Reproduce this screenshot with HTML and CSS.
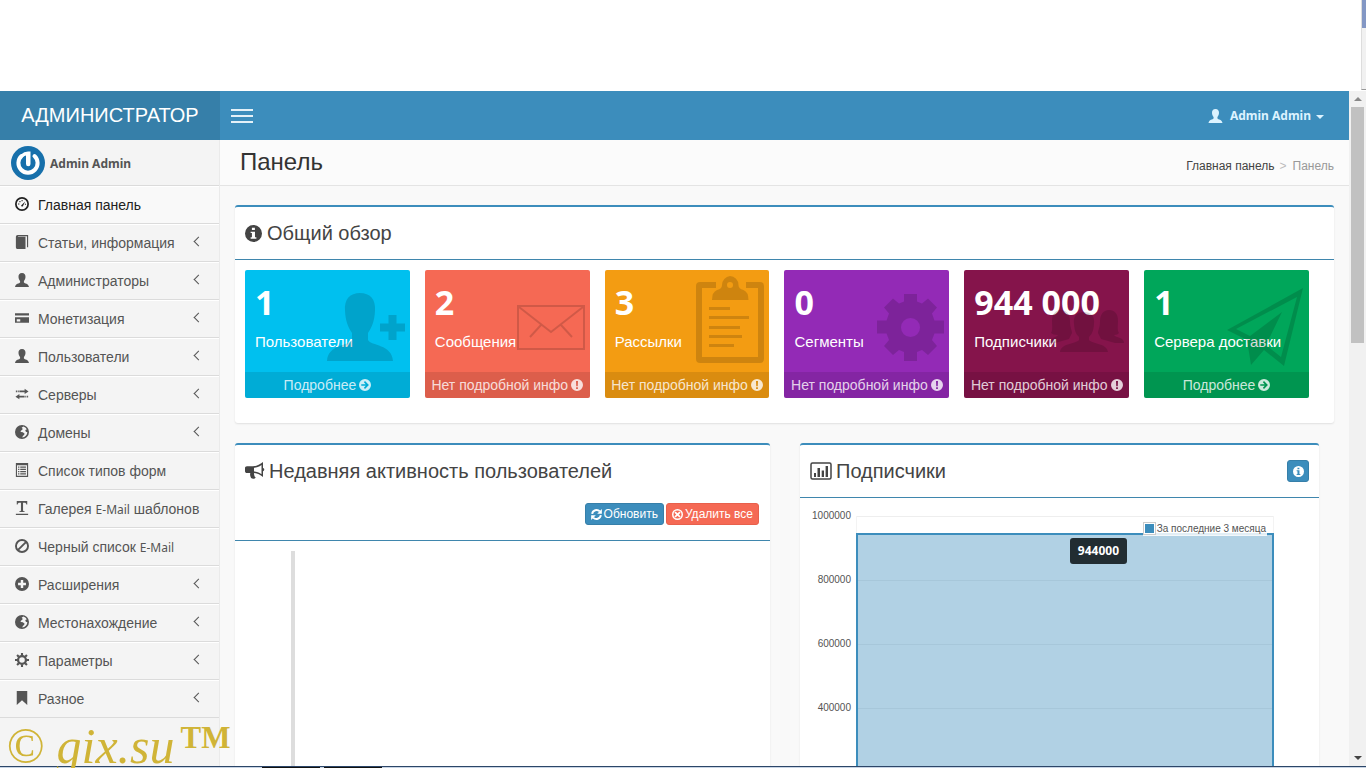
FILE: index.html
```html
<!DOCTYPE html>
<html lang="ru">
<head>
<meta charset="utf-8">
<title>Панель</title>
<link rel="stylesheet" href="styles.css">
</head>
<body>
<svg class="sprite" aria-hidden="true">
  <symbol id="user" viewBox="0 0 16 16"><path d="M8 0c2.900 0 4.200 1.900 4 4.700-.1 2-.9 3.500-1.800 4.400v1.700c.7 1.200 5.400 1.200 5.800 5.200H0c.4-4 5.100-4 5.800-5.200V9.100C4.900 8.200 4.100 6.700 4 4.700 3.800 1.900 5.100 0 8 0z"/></symbol>
  <symbol id="dash" viewBox="0 0 16 16"><circle cx="8" cy="8" r="7" fill="none" stroke="currentColor" stroke-width="2"/><path d="M7 9.600 11.600 5 9 10.600a1.200 1.200 0 0 1-2-1zM3.500 7.500h1.500v1.200H3.500zM5 4.700h1.300V6H5zM7.500 3.300h1.200v1.500H7.500zM11.300 7.700h1.300v1.200h-1.300z"/></symbol>
  <symbol id="book" viewBox="0 0 16 16"><path d="M3 0h12v14h-1.300V1.500H3.500V2H12v14H3.200A2 2 0 0 1 1 14V2a2 2 0 0 1 2-2z"/></symbol>
  <symbol id="card" viewBox="0 0 16 16"><path d="M0 2.500h16V5H0zM0 7h16v6.500H0zm2 2.500V12h4V9.500z" fill-rule="evenodd"/></symbol>
  <symbol id="transfer" viewBox="0 0 16 16"><path d="M5 4h6V2l4.500 3L11 8V6H5zM3 4h1.300v2H3zM1 4h1.200v2H1zM11 10H5V8l-4.500 3L5 14v-2h6zM11.800 10H13v2h-1.200zM13.800 10H15v2h-1.200z"/></symbol>
  <symbol id="globe" viewBox="0 0 16 16"><path fill-rule="evenodd" d="M8 0a8 8 0 1 1 0 16A8 8 0 0 1 8 0zm1.500 1.800L7.600 3.200 9 4.600 7.500 6l-1.300 1 .7 1 2.100.3 2 1.600-.7 1.600-1.400 1-.5 1.900c3-.5 5.600-2.900 5.700-6.100l-1.700-.7-.7-2 1.700-.6C12.600 3.300 11.200 2.300 9.500 1.800z"/></symbol>
  <symbol id="list" viewBox="0 0 16 16"><path fill-rule="evenodd" d="M1 0h14v16H1zm1.300 2.500v12.200h11.400V2.500zM3.500 4H5v1.300H3.500zM6 4h6.500v1.300H6zM3.500 6.600H5V8H3.500zM6 6.600h6.500V8H6zM3.500 9.200H5v1.300H3.500zM6 9.200h6.500v1.300H6zM3.500 11.800H5V13H3.500zM6 11.800h6.500V13H6z"/></symbol>
  <symbol id="textw" viewBox="0 0 16 16"><path d="M2 0h12v4h-1c-.2-1.400-.8-2-2.500-2H9.200v8.500c0 1 .5 1.200 1.800 1.300v.9H5v-.9c1.300-.1 1.800-.3 1.800-1.300V2H5.500C3.800 2 3.200 2.600 3 4H2zM1 14.500h14V16H1z"/></symbol>
  <symbol id="ban" viewBox="0 0 16 16"><g fill="none" stroke="currentColor" stroke-width="2.200"><circle cx="8" cy="8" r="6.900"/><path d="M3.500 12.500l9-9"/></g></symbol>
  <symbol id="plus" viewBox="0 0 16 16"><path fill-rule="evenodd" d="M8 0a8 8 0 1 1 0 16A8 8 0 0 1 8 0zM6.600 3.500v3.100H3.500v2.800h3.100v3.100h2.800V9.400h3.100V6.600H9.400V3.500z"/></symbol>
  <symbol id="cog" viewBox="0 0 16 16"><circle cx="8" cy="8" r="4.500" fill="none" stroke="currentColor" stroke-width="2.600"/><path d="M6.800 0h2.400v3H6.800zM6.800 13h2.400v3H6.800zM0 6.800h3v2.400H0zM13 6.800h3v2.400h-3zM1.500 3.200l1.700-1.700 2 2-1.700 1.700zM10.800 12.500l1.700-1.700 2 2-1.700 1.700zM3.200 14.500l-1.700-1.700 2-2 1.700 1.700zM12.500 5.200l-1.700-1.700 2-2 1.700 1.700z"/></symbol>
  <symbol id="mark" viewBox="0 0 16 16"><path d="M2 0h12v16l-6-5.500L2 16z"/></symbol>
  <symbol id="info" viewBox="0 0 16 16"><path fill-rule="evenodd" d="M8 0a8 8 0 1 1 0 16A8 8 0 0 1 8 0zM6.500 2.700v2.100h2.800V2.700zM5.300 6.300v1.300h1.200v4H5.300V13h5.400v-1.400H9.400V6.300z"/></symbol>
  <symbol id="bang" viewBox="0 0 16 16"><path fill-rule="evenodd" d="M8 0a8 8 0 1 1 0 16A8 8 0 0 1 8 0zM6.700 2.500l.3 7h2l.3-7zM6.800 11v2.300h2.400V11z"/></symbol>
  <symbol id="arrow" viewBox="0 0 16 16"><path fill-rule="evenodd" d="M8 0a8 8 0 1 1 0 16A8 8 0 0 1 8 0zM8 2.800 6.500 4.300 9 6.900H3v2.200h6l-2.500 2.600L8 13.200 13.200 8z"/></symbol>
  <symbol id="remove" viewBox="0 0 16 16"><circle cx="8" cy="8" r="6.900" fill="none" stroke="currentColor" stroke-width="2.200"/><path d="M5.200 3.500 8 6.200l2.800-2.700 1.800 1.800L9.800 8l2.800 2.800-1.800 1.700L8 9.800l-2.800 2.700-1.800-1.700L6.200 8 3.400 5.300z"/></symbol>
  <symbol id="refresh" viewBox="0 0 16 16"><path fill="none" stroke="currentColor" stroke-width="2.800" d="M1.700 7A6.400 6.400 0 0 1 12.800 3.600M14.300 9A6.400 6.400 0 0 1 3.200 12.400"/><path d="M15.800 0v6.800H9zM.2 16V9.200H7z"/></symbol>
  <symbol id="horn" viewBox="0 0 20 18"><path fill-rule="evenodd" d="M18 0v6c1.700.2 1.700 3 0 3.200V15c-2.700-2.300-5.500-3.700-8.500-4-.8.600-.7 1.500-.1 2-.4.900.2 1.700 1.300 2.600-.7 1.500-3.500 1.600-4.600.5C5.500 14.300 4.700 13 5.300 11H2C.8 11 0 10.300 0 9.200V6c0-1.100.8-1.800 2-1.800h6C11.500 4.200 15 2.600 18 0zm-1.500 3C14 4.800 11.500 5.600 9 5.800v3.700c2.500.2 5 1 7.500 2.700z"/></symbol>
  <symbol id="chart" viewBox="0 0 22 18"><rect x="1" y="1" width="20" height="16" rx="1.500" fill="none" stroke="currentColor" stroke-width="1.500"/><path d="M4 11h2v4H4zM7.500 6h2.500v9H7.500zM11.700 8.500H14V15h-2.300zM15.600 4H18v11h-2.400z"/></symbol>
</svg>

<div class="window-top"><span class="window-edge"></span></div>

<div class="viewport">
  <div class="app">
    <header class="topbar">
      <a class="brand" href="#">АДМИНИСТРАТОР</a>
      <button class="toggle" aria-label="Меню"><span></span><span></span><span></span></button>
      <a class="account" href="#"><svg class="ico"><use href="#user"/></svg>Admin Admin<i class="caret"></i></a>
    </header>
    <div class="body">
      <aside class="sidebar">
        <div class="profile">
          <svg class="avatar" viewBox="0 0 34 34"><circle cx="17" cy="17" r="17" fill="#1770ab"/><path d="M10.500 10A9.600 9.600 0 1 0 23.500 10" fill="none" stroke="#fff" stroke-width="4" stroke-linecap="round"/><path d="M10 8.500q3-3 7-3h2.500V18a2.200 2.200 0 0 1-4.500 0V9.500q-2 .5-3.500 2z" fill="#fff"/></svg>
          <span>Admin Admin</span>
        </div>
        <nav class="menu">
          <a class="active" href="#"><svg class="ico"><use href="#dash"/></svg>Главная панель</a>
          <a class="more" href="#"><svg class="ico"><use href="#book"/></svg>Статьи, информация</a>
          <a class="more" href="#"><svg class="ico"><use href="#user"/></svg>Администраторы</a>
          <a class="more" href="#"><svg class="ico"><use href="#card"/></svg>Монетизация</a>
          <a class="more" href="#"><svg class="ico"><use href="#user"/></svg>Пользователи</a>
          <a class="more" href="#"><svg class="ico"><use href="#transfer"/></svg>Серверы</a>
          <a class="more" href="#"><svg class="ico"><use href="#globe"/></svg>Домены</a>
          <a href="#"><svg class="ico"><use href="#list"/></svg>Список типов форм</a>
          <a href="#"><svg class="ico"><use href="#textw"/></svg><span>Галерея <span class="latin">E-Mail</span> шаблонов</span></a>
          <a href="#"><svg class="ico"><use href="#ban"/></svg><span>Черный список <span class="latin">E-Mail</span></span></a>
          <a class="more" href="#"><svg class="ico"><use href="#plus"/></svg>Расширения</a>
          <a class="more" href="#"><svg class="ico"><use href="#globe"/></svg>Местонахождение</a>
          <a class="more" href="#"><svg class="ico"><use href="#cog"/></svg>Параметры</a>
          <a class="more" href="#"><svg class="ico"><use href="#mark"/></svg>Разное</a>
        </nav>
      </aside>
      <main class="content">
        <div class="page-head">
          <h1>Панель</h1>
          <nav class="crumbs"><a href="#">Главная панель</a><span class="sep">&gt;</span><span>Панель</span></nav>
        </div>
        <div class="page">
          <section class="box">
            <div class="box-head"><h2><svg class="ico-lg"><use href="#info"/></svg>Общий обзор</h2></div>
            <div class="tiles">
              <article class="tile cyan">
                <div class="tile-main"><strong>1</strong><p>Пользователи</p></div>
                <svg class="art" viewBox="0 0 80 100"><path d="M35 23c10 0 16 6 15 18-.5 10-3 16-7 22v7c3 6 24 4 25 21H2c1-17 22-15 25-21v-7c-4-6-6.500-12-7-22-1-12 5-18 15-18zM63.500 45h8v8.500H80v8h-8.500V70h-8v-8.500H55v-8h8.500z"/></svg>
                <a href="#">Подробнее <svg class="ico-sm"><use href="#arrow"/></svg></a>
              </article>
              <article class="tile red">
                <div class="tile-main"><strong>2</strong><p>Сообщения</p></div>
                <svg class="art line" viewBox="0 0 80 100"><path stroke-width="2" d="M13 36h66v43H13zM14 37l32 25 32-25M36 55L25 67M56 55l11 12"/></svg>
                <a href="#">Нет подробной инфо <svg class="ico-sm"><use href="#bang"/></svg></a>
              </article>
              <article class="tile orange">
                <div class="tile-main"><strong>3</strong><p>Рассылки</p></div>
                <svg class="art" viewBox="0 0 80 100"><path fill-rule="evenodd" d="M32 12v6H18v69h56V18H62v-6h14q4 0 4 4v73q0 4-4 4H16q-4 0-4-4V16q0-4 4-4zM46 6a9 9 0 0 1 8.500 9q0 4 5 5 5 2 5 10H28q0-8 5-10 5-1 5-5A9 9 0 0 1 46 6zm0 6a3 3 0 1 0 0 6 3 3 0 0 0 0-6zM25 37h21v3H25zM25 46h40v3H25zM25 56h31v3H25zM25 65h33v3H25zM25 74h25v3H25z"/></svg>
                <a href="#">Нет подробной инфо <svg class="ico-sm"><use href="#bang"/></svg></a>
              </article>
              <article class="tile purple">
                <div class="tile-main"><strong>0</strong><p>Сегменты</p></div>
                <svg class="art" viewBox="0 0 80 100"><path fill-rule="evenodd" d="M40 24h13v7.500l5 2 6-5 9 9-5 6 2.500 7H80v13h-9.500L68 70l5 6-9 9-6-5-5 2v9H40v-9l-5-2-6 5-9-9 5-6-2.500-6.500H13v-13h9.500L25 43.500l-5-6 9-9 6 5 5-2zM46.500 48a9.500 9.500 0 1 0 0 19 9.500 9.500 0 0 0 0-19z"/></svg>
                <a href="#">Нет подробной инфо <svg class="ico-sm"><use href="#bang"/></svg></a>
              </article>
              <article class="tile maroon">
                <div class="tile-main"><strong>944 000</strong><p>Подписчики</p></div>
                <svg class="art" viewBox="0 0 80 100"><path d="M40 42c7 0 11 4 10 12-.5 7-2 10-5 13v3c3 4 18 3 19 12H16c1-9 16-8 19-12v-3c-3-3-4.500-6-5-13-1-8 3-12 10-12zM17 40c6 0 9 5 9 11 0 7 2 9 2 12l-3 6-14 4H6c0-6 6-5 8-8-3 0-6-1-7-2 2-3 1-8 1-12 0-7 3-11 9-11zM65 40c-6 0-9 5-9 11 0 7-2 9-2 12l3 6 14 4h9c0-6-8-5-10-8 3 0 4-1 5-2-2-3-1-8-1-12 0-7-3-11-9-11z"/></svg>
                <a href="#">Нет подробной инфо <svg class="ico-sm"><use href="#bang"/></svg></a>
              </article>
              <article class="tile green">
                <div class="tile-main"><strong>1</strong><p>Сервера доставки</p></div>
                <svg class="art" viewBox="0 0 80 100"><path fill-rule="evenodd" d="M79 18 60 96 40 80 27 95 23 70 3 60zM73 27 12 59l14 7 32-24-16 33 15 12z"/></svg>
                <a href="#">Подробнее <svg class="ico-sm"><use href="#arrow"/></svg></a>
              </article>
            </div>
          </section>

          <div class="columns">
            <section class="box">
              <div class="box-head stacked">
                <h2><svg class="ico-lg wide"><use href="#horn"/></svg>Недавняя активность пользователей</h2>
                <div class="tools">
                  <button class="btn blue"><svg class="ico-xs"><use href="#refresh"/></svg>Обновить</button>
                  <button class="btn danger"><svg class="ico-xs"><use href="#remove"/></svg>Удалить все</button>
                </div>
              </div>
              <div class="timeline"></div>
            </section>
            <section class="box">
              <div class="box-head">
                <h2><svg class="ico-lg wider"><use href="#chart"/></svg>Подписчики</h2>
                <button class="btn blue square" aria-label="Информация"><svg class="ico-xs"><use href="#info"/></svg></button>
              </div>
              <div class="graph">
                <div class="axis"><span>1000000</span><span>800000</span><span>600000</span><span>400000</span></div>
                <div class="plot">
                  <div class="area"></div>
                  <div class="legend"><i></i>За последние 3 месяца</div>
                  <div class="tip">944000</div>
                </div>
              </div>
            </section>
          </div>
        </div>
      </main>
    </div>
  </div>
  <div class="scroll"><i class="up"></i><span class="thumb"></span><i class="down"></i></div>
</div>
<div class="window-bottom"><span></span><span></span></div>
<div class="watermark"><i>© gix.su</i><b>TM</b></div>
</body>
</html>
```
FILE: styles.css
```css
* { box-sizing: border-box; }
body {
  position: relative;
  margin: 0;
  height: 100vh;
  display: flex;
  flex-direction: column;
  overflow: hidden;
  font: 14px/20px "Liberation Sans", sans-serif;
  color: #444;
  background: #f9f9f9;
}
a { color: inherit; text-decoration: none; }
svg { fill: currentColor; flex: none; }
h1, h2, p { margin: 0; font-weight: normal; }
button { font: inherit; cursor: pointer; }
.sprite { position: absolute; width: 0; height: 0; }

/* window frame */
.window-top { flex: none; height: 91px; background: #fff; display: flex; justify-content: flex-end; }
.window-edge { width: 5px; height: 90px; border-bottom: 1px solid #999; background: linear-gradient(#8397c4 0 28px, #f1f1f1 28px); border-left: 1px solid #ddd; }
.window-bottom { flex: none; height: 2px; background: #c8d4e4; border-top: 1px solid #2c4668; display: flex; gap: 4px; padding-left: 262px; }
.window-bottom span { width: 58px; height: 1px; background: #111; }
.viewport { flex: 1; min-height: 0; display: flex; overflow: hidden; }
.app { flex: 1; min-width: 0; display: flex; flex-direction: column; overflow: hidden; }
.scroll { width: 17px; background: #f1f1f1; display: flex; flex-direction: column; align-items: center; padding: 6px 0; }
.scroll .up, .scroll .down { border: 4px solid transparent; width: 0; height: 0; }
.scroll .up { border-top: 0; border-bottom: 4px solid #888; }
.scroll .down { border-bottom: 0; border-top: 4px solid #444; margin-top: auto; }
.thumb { width: 13px; height: 236px; margin-top: 6px; background: #c1c1c1; }
.watermark { position: absolute; left: 6px; bottom: -8px; display: flex; align-items: flex-start; gap: 6px; color: #d0b437; font: 50px/60px "Liberation Serif", serif; }
.watermark b { font-size: 31px; line-height: 44px; }

/* top bar */
.topbar { flex: none; height: 49px; display: flex; align-items: center; background: #3c8dbc; color: #fff; }
.brand { width: 220px; height: 49px; background: #367fa9; font-size: 20px; line-height: 48px; text-align: center; }
.toggle { width: 44px; height: 48px; padding: 0 11px; border: 0; background: none; display: flex; flex-direction: column; justify-content: center; gap: 4px; }
.toggle span { height: 2px; background: #e4f1f8; }
.account { margin-left: auto; margin-right: 25px; display: flex; align-items: center; color: #dcf3ff; font: bold 12px/20px "Noto Sans", sans-serif; }
.account .ico { width: 15px; height: 14px; margin-right: 7px; }
.caret { border: 4px solid transparent; border-top-color: currentColor; border-bottom: 0; margin: 2px 0 0 5px; }

/* sidebar */
.body { flex: 1; min-height: 0; display: flex; }
.sidebar { width: 220px; flex: none; background: #f4f4f4; color: #555; border-right: 1px solid #eaeaea; }
.profile { height: 46px; padding: 0 11px; display: flex; align-items: center; gap: 5px; border-bottom: 1px solid #dbdbdb; font: bold 12px/20px "Noto Sans", sans-serif; }
.avatar { width: 34px; height: 34px; }
.profile span { padding-top: 3px; }
.menu a { height: 38px; padding: 0 15px; display: flex; align-items: center; border-top: 1px solid #fff; border-bottom: 1px solid #dbdbdb; white-space: nowrap; }
.menu .active { background: #f9f9f9; color: #222; }
.ico { width: 14px; height: 14px; margin-right: 9px; }
.menu .ico { margin-bottom: 2px; }
.more::after { content: ""; width: 6px; height: 6px; margin: 0 2px 4px auto; border-left: 1px solid; border-bottom: 1px solid; transform: rotate(45deg); }
.latin { font-family: "Noto Sans", sans-serif; font-size: 12px; }

/* page */
.content { flex: 1; min-width: 0; }
.page-head { height: 46px; padding: 0 15px 0 20px; display: flex; justify-content: space-between; background: #fbfbfb; border-bottom: 1px solid #e4e4e4; }
.page-head h1 { font-size: 24px; line-height: 44px; color: #333; }
.crumbs { font-size: 12px; line-height: 52px; color: #999; }
.crumbs a { color: #444; }
.sep { color: #bbb; padding: 0 6px 0 5px; }
.page { padding: 19px 15px 0; }
.box { background: #fff; border-top: 2px solid #3c8dbc; border-radius: 3px; box-shadow: 0 1px 2px rgba(0, 0, 0, .1); }
.box-head { display: flex; align-items: center; justify-content: space-between; padding: 16px 10px; border-bottom: 1px solid #3f86ad; }
.box-head h2 { display: flex; align-items: center; font-size: 20px; line-height: 20px; color: #444; }
.ico-lg { width: 17px; height: 17px; margin-right: 5px; }
.ico-lg.wide { width: 20px; height: 18px; margin-right: 4px; }
.ico-lg.wider { width: 22px; height: 18px; margin-right: 4px; }
.tiles { display: grid; grid-template-columns: repeat(6, 1fr); gap: 15px; padding: 10px 25px 25px 10px; }
.tile { position: relative; overflow: hidden; border-radius: 2px; color: #fff; }
.tile-main { height: 102px; padding: 12px 10px; }
.tile strong { display: block; font: bold 34px/40px "Noto Sans", sans-serif; white-space: nowrap; }
.tile p { margin-top: 10px; font-size: 15px; white-space: nowrap; }
.art { position: absolute; right: 5px; top: 0; width: 80px; height: 100px; fill: rgba(0, 0, 0, .15); }
.art.line { fill: none; stroke: rgba(0, 0, 0, .15); }
.tile a { display: flex; align-items: center; justify-content: center; gap: 3px; height: 26px; background: rgba(0, 0, 0, .1); color: rgba(255, 255, 255, .8); white-space: nowrap; }
.ico-sm { width: 12px; height: 12px; }
.cyan { background: #00c0ef; }
.red { background: #f56954; }
.orange { background: #f39c12; }
.purple { background: #932ab6; }
.maroon { background: #85144b; }
.green { background: #00a65a; }

.columns { display: grid; grid-template-columns: 535fr 519fr; gap: 30px; margin-top: 20px; padding-right: 15px; align-items: start; }
.box-head.stacked { display: block; padding: 16px 11px 15px 10px; }
.tools { display: flex; justify-content: flex-end; gap: 2px; margin-top: 22px; }
.btn { display: flex; align-items: center; gap: 2px; height: 22px; padding: 0 5px; border: 1px solid #367fa9; border-radius: 3px; color: #fff; font-size: 12px; line-height: 18px; }
.blue { background: #3c8dbc; }
.danger { background: #f56954; border-color: #e8604c; }
.square { width: 22px; margin: -1px 0; justify-content: center; padding: 0; }
.ico-xs { width: 11px; height: 11px; }
.timeline { height: 400px; margin: 10px 56px; border-left: 4px solid #ddd; }

.graph { display: flex; gap: 5px; padding: 8px 45px 20px 10px; font-size: 10px; color: #545454; }
.axis { width: 41px; text-align: right; }
.axis span { display: block; height: 64px; }
.plot { position: relative; flex: 1; height: 320px; margin-top: 10px; padding-top: 17px; border: 1px solid #f3f3f3; border-top: 0; background: repeating-linear-gradient(#eee 0 1px, transparent 1px 64px); }
.area { height: 303px; margin: 0 -1px; background: rgba(60, 141, 188, .4); border: 2px solid #3c8dbc; }
.legend { position: absolute; right: 6px; top: 5px; display: flex; align-items: center; gap: 1px; padding-right: 1px; background: rgba(255, 255, 255, .85); font-size: 10px; line-height: 15px; }
.legend i { width: 13px; height: 13px; border: 1px solid #ccc; background: #3c8dbc; box-shadow: inset 0 0 0 1px #fff; }
.tip { position: absolute; right: 146px; top: 22px; padding: 3px 8px; border-radius: 3px; background: #222d32; color: #fff; font: bold 12px/20px "Noto Sans", sans-serif; }
```
